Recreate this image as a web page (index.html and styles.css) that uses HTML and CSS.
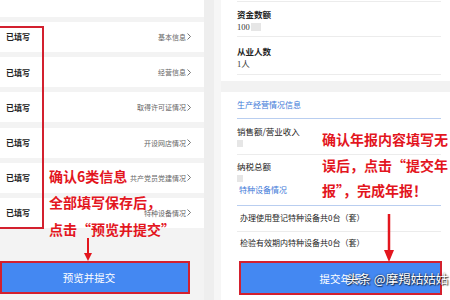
FILE: index.html
```html
<!DOCTYPE html>
<html lang="zh-CN">
<head>
<meta charset="utf-8">
<title>年报提交</title>
<link rel="stylesheet" href="styles.css">
</head>
<body>
<div class="page">
  <section class="left">
    <div class="rows">
      <div class="row row-top"></div>
      <div class="row"><span class="status">已填写</span><span class="link">基本信息<svg class="chev" viewBox="0 0 4 7"><path d="M0.5 0.5 L3.5 3.5 L0.5 6.5"/></svg></span></div>
      <div class="row"><span class="status">已填写</span><span class="link">经营信息<svg class="chev" viewBox="0 0 4 7"><path d="M0.5 0.5 L3.5 3.5 L0.5 6.5"/></svg></span></div>
      <div class="row"><span class="status">已填写</span><span class="link">取得许可证情况<svg class="chev" viewBox="0 0 4 7"><path d="M0.5 0.5 L3.5 3.5 L0.5 6.5"/></svg></span></div>
      <div class="row"><span class="status">已填写</span><span class="link">开设网店情况<svg class="chev" viewBox="0 0 4 7"><path d="M0.5 0.5 L3.5 3.5 L0.5 6.5"/></svg></span></div>
      <div class="row"><span class="status">已填写</span><span class="link">共产党员党建情况<svg class="chev" viewBox="0 0 4 7"><path d="M0.5 0.5 L3.5 3.5 L0.5 6.5"/></svg></span></div>
      <div class="row"><span class="status">已填写</span><span class="link">特种设备情况<svg class="chev" viewBox="0 0 4 7"><path d="M0.5 0.5 L3.5 3.5 L0.5 6.5"/></svg></span></div>
    </div>
    <div class="btn btn-left">预览并提交</div>
  </section>

  <div class="divider"></div>

  <section class="right">
    <div class="r-line"></div>
    <div class="field field-1">
      <div class="label bold">资金数额</div>
      <div class="value">100<span class="blur wide"></span></div>
    </div>
    <div class="field field-2">
      <div class="label bold">从业人数</div>
      <div class="value">1人</div>
    </div>
    <div class="band"></div>
    <div class="section-title title-1">生产经营情况信息</div>
    <div class="field field-3">
      <div class="label">销售额/营业收入</div>
      <div class="value"><span class="blur"></span></div>
    </div>
    <div class="field field-4">
      <div class="label">纳税总额</div>
      <div class="value"><span class="blur"></span></div>
    </div>
    <div class="section-title title-2">特种设备情况</div>
    <div class="field field-5"><div class="label">办理使用登记特种设备共0台（套）</div></div>
    <div class="field field-6"><div class="label">检验有效期内特种设备共0台（套）</div></div>
    <div class="btn btn-right">提交年报</div>
  </section>

  <div class="hl-box"></div>
  <p class="note note-left">确认6类信息<br>全部填写保存后，<br>点击“预览并提交”</p>
  <svg class="arrow arrow-left" viewBox="0 0 8 24"><line x1="4" y1="0" x2="4" y2="16"/><polygon points="0,15 8,15 4,23"/></svg>

  <p class="note note-right">确认年报内容填写无<br>误后，点击“提交年<br>报”，完成年报！</p>
  <svg class="arrow arrow-right" viewBox="0 0 10 48"><line x1="5" y1="0" x2="5" y2="38"/><polygon points="0,36 10,36 5,48"/></svg>

  <div class="watermark">头条 @摩羯姑姑姑</div>
</div>
</body>
</html>
```

FILE: styles.css
```css
* { box-sizing: border-box; }
html, body { margin: 0; padding: 0; }
body {
  width: 450px;
  height: 300px;
  overflow: hidden;
  font-family: "Noto Sans CJK SC", "Noto Sans", sans-serif;
  background: #f3f3f3;
}
.page {
  position: relative;
  display: flex;
  width: 450px;
  height: 300px;
  overflow: hidden;
}

/* left screen */
.left {
  width: 204px;
  flex: none;
  background: #f3f3f3;
  display: flex;
  flex-direction: column;
}
.rows {
  display: flex;
  flex-direction: column;
  gap: 5.2px;
}
.row {
  height: 30px;
  background: #fff;
  display: flex;
  align-items: center;
  justify-content: space-between;
  padding: 0 13px 0 6px;
}
.row-top { height: 16.8px; }
.status {
  font-size: 8px;
  font-weight: 700;
  color: #222;
}
.link {
  display: flex;
  align-items: center;
  font-size: 7px;
  color: #666;
}
.chev {
  width: 4px;
  height: 7px;
  margin-left: 1px;
}
.chev path {
  fill: none;
  stroke: #555;
  stroke-width: 0.8;
}

.btn {
  background: #4488f2;
  color: #fff;
  font-size: 10.5px;
  display: flex;
  align-items: center;
  justify-content: center;
  border: 2.5px solid #d3202e;
}
.btn-left {
  margin-top: 33px;
  width: 190px;
  height: 33px;
  padding-right: 12px;
}

.divider {
  width: 17px;
  flex: none;
  background: linear-gradient(to right, #eeeeee 0, #eeeeee 10px, #f6f6f6 10px);
}

/* right screen */
.right {
  flex: 1;
  background: #fff;
  display: flex;
  flex-direction: column;
}
.r-line {
  margin: 1px 9px 0 16px;
  border-top: 1px solid #ececec;
}
.field {
  margin: 0 9px 0 16px;
  color: #222;
}
.label {
  font-size: 8.5px;
  line-height: 14px;
  white-space: nowrap;
}
.bold { font-weight: 700; }
.value {
  font-family: "Liberation Serif", "Noto Sans CJK SC", serif;
  font-size: 8.5px;
  line-height: 12px;
  color: #333;
  display: flex;
  align-items: center;
}
.blur {
  display: inline-block;
  width: 6px;
  height: 7px;
  background: #e6e6e6;
}
.blur.wide { width: 10px; height: 8px; margin-left: 1px; }

.field-1 { padding: 5px 0 3px; border-bottom: 1px solid #ececec; }
.field-2 { padding: 7px 0 4px; border-bottom: 1px solid #ececec; }
.band {
  margin-top: 6px;
  height: 11px;
  background: #f2f2f2;
}
.section-title {
  margin: 0 9px 0 16px;
  color: #3d78d8;
  font-size: 8px;
  white-space: nowrap;
  border-bottom: 1px solid #b9cef0;
}
.title-1 { line-height: 26px; }
.field-3 { padding: 5px 0 6px; border-bottom: 1px solid #ececec; }
.field-3 .value, .field-4 .value { line-height: 10px; height: 10px; }
.field-4 { padding: 4px 0 0; }
.title-2 { line-height: 14px; padding: 0 0 8px 2px; }
.field-5 { padding: 5px 0 6px 3px; border-bottom: 1px solid #ececec; }
.field-6 { padding: 4px 0 5px 3px; }
.field-5 .label, .field-6 .label { font-size: 8px; }
.btn-right {
  margin: 6px 0 0 18px;
  width: 203px;
  height: 34px;
}

/* annotations */
.hl-box {
  position: absolute;
  left: -3px;
  top: 26px;
  width: 47px;
  height: 203px;
  border: 2px solid #d3202e;
}
.note {
  position: absolute;
  margin: 0;
  color: #e3161e;
  font-weight: 700;
  font-size: 14px;
  white-space: nowrap;
}
.note-left { left: 49px; top: 162.5px; line-height: 26.5px; }
.note-right { left: 322px; top: 127px; line-height: 25.5px; }
.arrow { position: absolute; }
.arrow line { stroke: #e3161e; stroke-width: 2; }
.arrow polygon { fill: #e3161e; }
.arrow-left { left: 84px; top: 238px; width: 8px; height: 24px; }
.arrow-right { left: 384px; top: 214px; width: 10px; height: 48px; }
.arrow-right line { stroke-width: 2.5; }

.watermark {
  position: absolute;
  left: 346px;
  top: 270px;
  font-size: 12.5px;
  line-height: 18px;
  color: #fff;
  white-space: nowrap;
  text-shadow: 0 0 2px rgba(0,0,0,.8), 1px 1px 1px rgba(0,0,0,.6);
}
```
